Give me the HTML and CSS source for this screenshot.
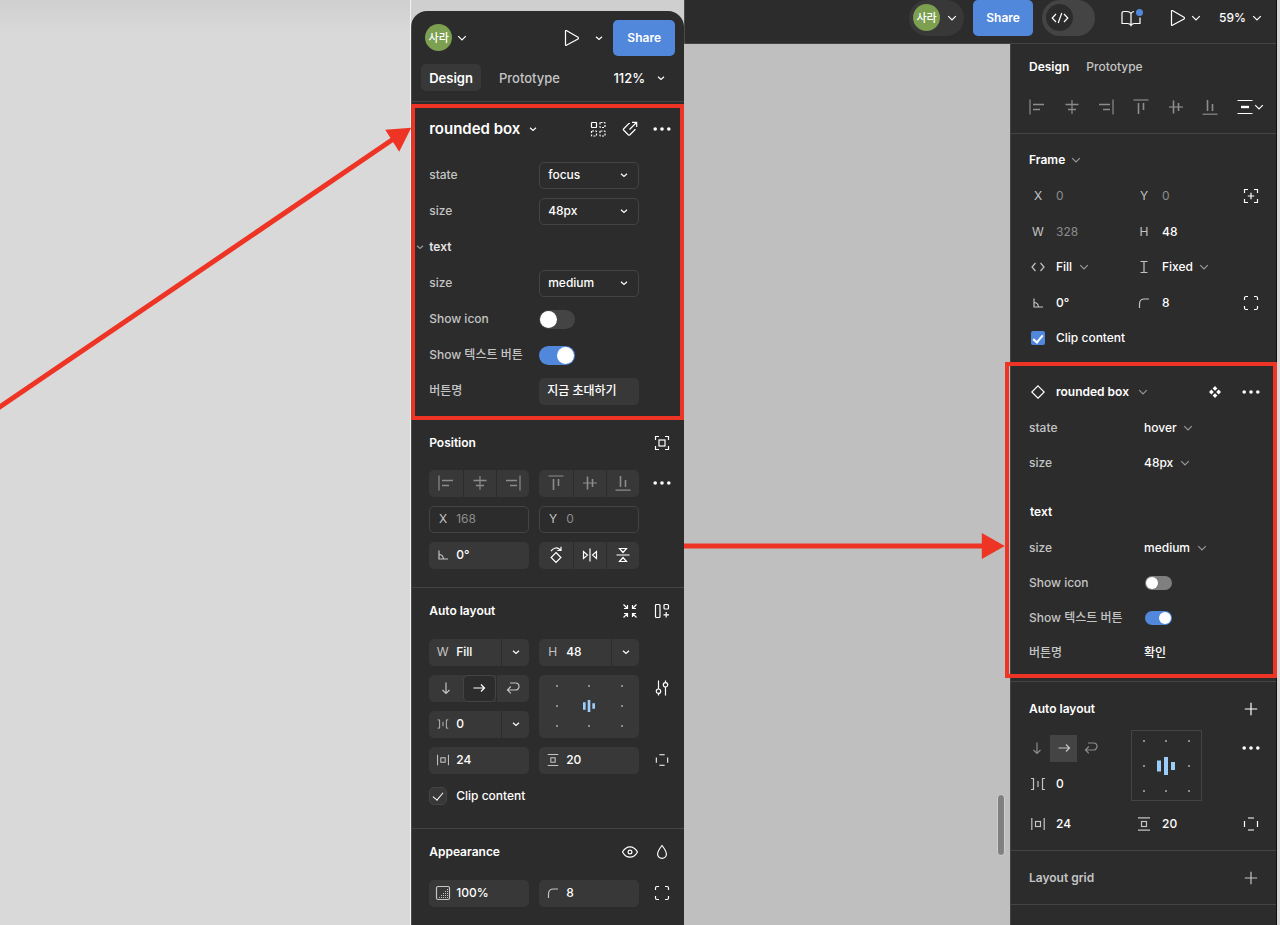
FILE: index.html
```html
<!DOCTYPE html>
<html lang="ko">
<head>
<meta charset="utf-8">
<meta name="viewport" content="width=device-width, initial-scale=1">
<title>Design panel comparison</title>
<link rel="stylesheet" href="styles.css">
</head>
<body>
<svg class="sprite" aria-hidden="true">
  <symbol id="chev" viewBox="0 0 10 10"><path d="M2 3.8 5 6.500 8 3.800"/></symbol>
  <symbol id="chev-wide" viewBox="0 0 10 10"><path d="M1.200 3.200 5 7 8.800 3.200"/></symbol>
  <symbol id="play" viewBox="0 0 16 18"><path d="M1.500 2.200v13.600q0 .9.900.5L14 10q1-.9 0-1.800L2.400 1.600q-.9-.3-.9.600Z"/></symbol>
  <symbol id="dots" viewBox="0 0 18 6"><g fill="currentColor" stroke="none"><circle cx="2.200" cy="3" r="1.800"/><circle cx="9" cy="3" r="1.800"/><circle cx="15.800" cy="3" r="1.800"/></g></symbol>
  <symbol id="al-left" viewBox="0 0 16 16"><path d="M1 .5v15"/><path stroke-width="1.600" d="M4 5.500h11M4 10.500h7"/></symbol>
  <symbol id="al-hc" viewBox="0 0 16 16"><path d="M8 1v14"/><path stroke-width="1.600" d="M1.500 5.500h13M4 10.500h8"/></symbol>
  <symbol id="al-right" viewBox="0 0 16 16"><path d="M15 .5v15"/><path stroke-width="1.600" d="M1 5.500h11M5 10.500h7"/></symbol>
  <symbol id="al-top" viewBox="0 0 16 16"><path d="M.5 1h15"/><path stroke-width="1.600" d="M5.500 4v11M10.500 4v7"/></symbol>
  <symbol id="al-vc" viewBox="0 0 16 16"><path d="M1 8h14"/><path stroke-width="1.600" d="M5.500 1.500v13M10.500 4v8"/></symbol>
  <symbol id="al-bottom" viewBox="0 0 16 16"><path d="M.5 15.200h15"/><path stroke-width="1.600" d="M5.500 1v11M10.500 5v7"/></symbol>
  <symbol id="corners" viewBox="0 0 16 16"><path d="M1.500 5V3q0-1.500 1.500-1.500h2M11 1.500h2q1.500 0 1.500 1.500v2M14.500 11v2q0 1.500-1.500 1.500h-2M5 14.500H3q-1.500 0-1.500-1.500v-2"/></symbol>
  <symbol id="target" viewBox="0 0 16 16"><path d="M1.500 5V1.500H5M11 1.500h3.500V5M14.500 11v3.500H11M5 14.500H1.500V11"/><rect x="5" y="5" width="6" height="6"/></symbol>
  <symbol id="target-plus" viewBox="0 0 16 16"><path d="M1.500 5V1.500H5M11 1.500h3.500V5M14.500 11v3.500H11M5 14.500H1.500V11M8 4.800v6.400M4.800 8h6.400"/></symbol>
  <symbol id="angle" viewBox="0 0 12 12"><path d="M2 1.500V10h9M2 5.500q4 0 4.500 4.500"/></symbol>
  <symbol id="radius" viewBox="0 0 12 12"><path d="M1.500 11V7q0-5 5-5H11"/></symbol>
  <symbol id="down" viewBox="0 0 14 14"><path d="M7 1.500v11M3.500 9 7 12.500 10.500 9"/></symbol>
  <symbol id="right" viewBox="0 0 14 14"><path d="M1.500 7h11M9 3.500 12.500 7 9 10.500"/></symbol>
  <symbol id="wrap" viewBox="0 0 14 14"><path d="M4 2h5.500a3.500 3.500 0 0 1 0 7H1.500M4.800 5.500 1.500 9l3.300 3.300"/></symbol>
  <symbol id="gap" viewBox="0 0 16 16"><path d="M1 2.500h2.500v11H1M8 5v6M15 2.500h-2.500v11H15"/></symbol>
  <symbol id="pad-h" viewBox="0 0 16 16"><path d="M1.800 2v12M14.200 2v12"/><rect x="5.500" y="5.500" width="5" height="5"/></symbol>
  <symbol id="pad-v" viewBox="0 0 16 16"><path d="M2 1.800h12M2 14.200h12"/><rect x="5.500" y="5.500" width="5" height="5"/></symbol>
  <symbol id="sides" viewBox="0 0 16 16"><path d="M5 2h6M5 14h6M1.500 5v6M14.500 5v6"/></symbol>
  <symbol id="plus" viewBox="0 0 14 14"><path d="M7 .8v12.400M.8 7h12.400"/></symbol>
  <symbol id="grid-of-dots" viewBox="0 0 16 16"><rect x="1.500" y="1.500" width="5" height="5" rx=".5"/><g stroke-dasharray="2 1.300"><rect x="10" y="1.500" width="5" height="5" rx=".5"/><rect x="1.500" y="10" width="5" height="5" rx=".5"/><rect x="10" y="10" width="5" height="5" rx=".5"/></g></symbol>
  <symbol id="detach" viewBox="0 0 16 16"><path d="M8 2.500H6.800L1.500 8q-.5.500 0 1l5 5q.6.500 1.200 0l5.300-5.300V8M7.500 8.500l7-7M10 1.300h4.700V6"/></symbol>
  <symbol id="rotate" viewBox="0 0 16 18"><path d="m8 6.500 4.900 5L8 16.500l-4.900-5ZM3 5Q7.500-.5 12.500 4M13 .8v3.700H9.300"/></symbol>
  <symbol id="flip-h" viewBox="0 0 16 16"><path d="M8 1.500v13M1.500 4.500v7l4-3.500ZM14.500 4.500v7l-4-3.500Z"/></symbol>
  <symbol id="flip-v" viewBox="0 0 16 16"><path d="M1.500 8h13M4.500 1.500h7L8 5.500ZM4.500 14.500h7L8 10.500Z"/></symbol>
  <symbol id="shrink" viewBox="0 0 16 16"><path d="m1.500 1.500 4 4M5.500 2v3.500H2M14.500 1.500l-4 4M10.500 2v3.500H14M1.500 14.500l4-4M5.500 14v-3.500H2M14.500 14.500l-4-4M10.500 14v-3.500H14"/></symbol>
  <symbol id="layout-plus" viewBox="0 0 16 16"><rect x="1.500" y="1.500" width="4.500" height="13" rx="1"/><rect x="10" y="1.500" width="4.500" height="4.500" rx="1"/><path d="M12.200 9v5.500M9.500 11.800H15"/></symbol>
  <symbol id="sliders" viewBox="0 0 16 16"><path d="M4.500.5V9M4.500 13.500v2M11.500.5v2M11.500 7v8.500"/><circle cx="4.500" cy="11.200" r="2.200"/><circle cx="11.500" cy="4.800" r="2.200"/></symbol>
  <symbol id="eye" viewBox="0 0 18 14"><path d="M1.500 7Q4.500 1.800 9 1.800T16.500 7Q13.500 12.200 9 12.200T1.500 7Z"/><circle cx="9" cy="7" r="1.900"/></symbol>
  <symbol id="drop" viewBox="0 0 14 16"><path d="M7 1.500Q2.600 7 2.600 10a4.400 4.400 0 0 0 8.800 0Q11.400 7 7 1.500Z"/></symbol>
  <symbol id="opacity" viewBox="0 0 16 16"><rect x="1.500" y="1.500" width="13" height="13" rx="1.500"/><path stroke-dasharray="1 1" d="M4 12.500h9M6 10.500h7M8 8.500h5M10 6.500h3M12 4.500h1"/></symbol>
  <symbol id="hug" viewBox="0 0 14 10"><path d="M4.500 1 1 5l3.500 4M9.500 1 13 5 9.500 9"/></symbol>
  <symbol id="ibeam" viewBox="0 0 10 14"><path d="M5 1.500v11M1.500 1.500h7M1.500 12.500h7"/></symbol>
  <symbol id="diamond" viewBox="0 0 14 14"><path d="m7 .8 6.200 6.200L7 13.200.8 7Z"/></symbol>
  <symbol id="component" viewBox="0 0 12 12"><path fill="currentColor" stroke="none" d="m6 0 2.400 2.400L6 4.800 3.600 2.400ZM6 7.200l2.400 2.400L6 12 3.600 9.600ZM2.400 3.600 4.800 6 2.400 8.400 0 6ZM9.600 3.600 12 6 9.600 8.400 7.200 6Z"/></symbol>
  <symbol id="code" viewBox="0 0 18 14"><path d="M5 3 1.200 7 5 11M13 3l3.800 4L13 11M10.800 2 7.200 12"/></symbol>
  <symbol id="book" viewBox="0 0 22 18"><path d="M11 4.500Q9.500 2.500 7 2.500H4Q2 2.500 2 4.500v10h5.500q2.500 0 3.500 2 1-2 3.500-2H20V8.500M11 4.500v11.500M11 4.500Q12 2.800 14 2.500"/></symbol>
  <symbol id="distribute" viewBox="0 0 16 16"><path d="M.5 1.500h15M.5 14.500h15"/><path stroke-width="2.400" d="M4 8h8"/></symbol>
  <symbol id="bars" viewBox="0 0 18 18"><path stroke="none" fill="currentColor" d="M0 3.500h4v11H0ZM7 0h4v18H7ZM14 5h4v8h-4Z"/></symbol>
</svg>

<main class="board">
  <div class="backdrop">
    <svg class="arrow arrow-up" viewBox="0 0 411 925" aria-hidden="true">
      <path class="shaft" d="M-2 409 396 138"/><path class="head" d="M412 128 400 152 386 130Z"/>
    </svg>
  </div>

  <aside class="panel" aria-label="New design panel">
    <header class="panel-top">
      <span class="avatar">사라</span>
      <button class="plain" aria-label="Account menu"><svg class="i10"><use href="#chev-wide"/></svg></button>
      <span class="push"></span>
      <button class="plain" aria-label="Play"><svg class="i-play"><use href="#play"/></svg></button>
      <button class="plain play-menu" aria-label="Play options"><svg class="i10"><use href="#chev"/></svg></button>
      <button class="share">Share</button>
    </header>
    <nav class="tabs">
      <button class="tab tab-on">Design</button>
      <button class="tab">Prototype</button>
      <button class="plain zoom">112% <svg class="i10"><use href="#chev"/></svg></button>
    </nav>

    <section class="marked">
      <div class="heading heading-big">
        <h2>rounded box</h2><svg class="i10"><use href="#chev"/></svg>
        <div class="actions">
          <button class="plain" aria-label="Variants"><svg class="i16"><use href="#grid-of-dots"/></svg></button>
          <button class="plain" aria-label="Go to component"><svg class="i16"><use href="#detach"/></svg></button>
          <button class="plain" aria-label="More"><svg class="i-dots"><use href="#dots"/></svg></button>
        </div>
      </div>
      <div class="props">
        <label for="a-state">state</label>
        <span class="pick"><select id="a-state"><option>focus</option></select><svg class="i10"><use href="#chev"/></svg></span>
        <label for="a-size">size</label>
        <span class="pick"><select id="a-size"><option>48px</option></select><svg class="i10"><use href="#chev"/></svg></span>
        <h3 class="group"><svg class="i10 dim"><use href="#chev"/></svg>text</h3>
        <label for="a-tsize">size</label>
        <span class="pick"><select id="a-tsize"><option>medium</option></select><svg class="i10"><use href="#chev"/></svg></span>
        <label for="a-icon">Show icon</label>
        <input class="toggle" type="checkbox" role="switch" id="a-icon">
        <label for="a-btn">Show 텍스트 버튼</label>
        <input class="toggle" type="checkbox" role="switch" id="a-btn" checked>
        <label for="a-name">버튼명</label>
        <span class="field"><input type="text" id="a-name" value="지금 초대하기"></span>
      </div>
    </section>

    <section class="section">
      <div class="heading"><h2>Position</h2><div class="actions"><button class="plain" aria-label="Absolute position"><svg class="i16"><use href="#target"/></svg></button></div></div>
      <div class="fields">
        <div class="segment muted">
          <button aria-label="Align left"><svg class="i16"><use href="#al-left"/></svg></button>
          <button aria-label="Align horizontal centers"><svg class="i16"><use href="#al-hc"/></svg></button>
          <button aria-label="Align right"><svg class="i16"><use href="#al-right"/></svg></button>
        </div>
        <div class="segment muted">
          <button aria-label="Align top"><svg class="i16"><use href="#al-top"/></svg></button>
          <button aria-label="Align vertical centers"><svg class="i16"><use href="#al-vc"/></svg></button>
          <button aria-label="Align bottom"><svg class="i16"><use href="#al-bottom"/></svg></button>
        </div>
        <button class="plain" aria-label="More"><svg class="i-dots"><use href="#dots"/></svg></button>
        <label class="field outlined"><span class="key">X</span><input type="text" value="168"></label>
        <label class="field outlined"><span class="key">Y</span><input type="text" value="0"></label>
        <span></span>
        <label class="field"><span class="key"><svg class="i12"><use href="#angle"/></svg></span><input type="text" value="0°" aria-label="Rotation"></label>
        <div class="segment">
          <button aria-label="Rotate"><svg class="i-play"><use href="#rotate"/></svg></button>
          <button aria-label="Flip horizontal"><svg class="i16"><use href="#flip-h"/></svg></button>
          <button aria-label="Flip vertical"><svg class="i16"><use href="#flip-v"/></svg></button>
        </div>
        <span></span>
      </div>
    </section>

    <section class="section">
      <div class="heading heading-tall"><h2>Auto layout</h2><div class="actions">
        <button class="plain" aria-label="Resize to fit"><svg class="i16"><use href="#shrink"/></svg></button>
        <button class="plain" aria-label="Add layout"><svg class="i16"><use href="#layout-plus"/></svg></button></div></div>
      <div class="fields">
        <div class="field split"><label class="key" for="a-w">W</label><input type="text" id="a-w" value="Fill"><button aria-label="Width mode"><svg class="i10"><use href="#chev"/></svg></button></div>
        <div class="field split"><label class="key" for="a-h">H</label><input type="text" id="a-h" value="48"><button aria-label="Height mode"><svg class="i10"><use href="#chev"/></svg></button></div>
        <span></span>
        <div class="segment flow">
          <button aria-label="Vertical"><svg class="i14"><use href="#down"/></svg></button>
          <button class="on" aria-label="Horizontal"><svg class="i14"><use href="#right"/></svg></button>
          <button aria-label="Wrap"><svg class="i14"><use href="#wrap"/></svg></button>
        </div>
        <div class="align-pad">
          <i></i><i></i><i></i><i></i><svg class="i12 bars"><use href="#bars"/></svg><i></i><i></i><i></i><i></i>
        </div>
        <button class="plain" aria-label="Layout settings"><svg class="i16"><use href="#sliders"/></svg></button>
        <div class="field split"><span class="key"><svg class="i12"><use href="#gap"/></svg></span><input type="text" value="0" aria-label="Gap"><button aria-label="Gap mode"><svg class="i10"><use href="#chev"/></svg></button></div>
        <span></span>
        <label class="field"><span class="key"><svg class="i14"><use href="#pad-h"/></svg></span><input type="text" value="24" aria-label="Horizontal padding"></label>
        <label class="field"><span class="key"><svg class="i14"><use href="#pad-v"/></svg></span><input type="text" value="20" aria-label="Vertical padding"></label>
        <button class="plain" aria-label="Individual padding"><svg class="i14"><use href="#sides"/></svg></button>
        <label class="check"><input type="checkbox" checked>Clip content</label>
      </div>
    </section>

    <section class="section">
      <div class="heading heading-tall"><h2>Appearance</h2><div class="actions">
        <button class="plain" aria-label="Visibility"><svg class="i-eye"><use href="#eye"/></svg></button>
        <button class="plain" aria-label="Blend mode"><svg class="i16"><use href="#drop"/></svg></button></div></div>
      <div class="fields">
        <label class="field"><span class="key"><svg class="i16"><use href="#opacity"/></svg></span><input type="text" value="100%" aria-label="Opacity"></label>
        <label class="field"><span class="key"><svg class="i12"><use href="#radius"/></svg></span><input type="text" value="8" aria-label="Corner radius"></label>
        <button class="plain" aria-label="Individual corners"><svg class="i16"><use href="#corners"/></svg></button>
      </div>
    </section>
  </aside>

  <div class="editor">
    <header class="toolbar">
      <button class="account"><span class="avatar">사라</span><svg class="i10"><use href="#chev-wide"/></svg></button>
      <button class="share">Share</button>
      <button class="dev" aria-label="Dev mode"><span class="knob"><svg class="i-eye"><use href="#code"/></svg></span></button>
      <button class="plain book" aria-label="Library"><svg class="i-book"><use href="#book"/></svg><span class="badge"></span></button>
      <button class="plain present" aria-label="Present"><svg class="i-play"><use href="#play"/></svg><svg class="i10"><use href="#chev-wide"/></svg></button>
      <button class="plain percent">59% <svg class="i10"><use href="#chev-wide"/></svg></button>
    </header>
    <div class="work">
      <div class="canvas">
        <svg class="arrow arrow-right" viewBox="0 0 321 26" aria-hidden="true">
          <path class="shaft" d="M0 13h300"/><path class="head" d="M321 13 298 26V0Z"/>
        </svg>
        <div class="scrollbar"></div>
      </div>
      <aside class="sidebar" aria-label="Old design panel">
        <nav class="side-tabs"><button class="plain strong">Design</button><button class="plain soft">Prototype</button></nav>
        <div class="side-align">
          <button class="plain" aria-label="Align left"><svg class="i16"><use href="#al-left"/></svg></button>
          <button class="plain" aria-label="Align horizontal centers"><svg class="i16"><use href="#al-hc"/></svg></button>
          <button class="plain" aria-label="Align right"><svg class="i16"><use href="#al-right"/></svg></button>
          <button class="plain" aria-label="Align top"><svg class="i16"><use href="#al-top"/></svg></button>
          <button class="plain" aria-label="Align vertical centers"><svg class="i16"><use href="#al-vc"/></svg></button>
          <button class="plain" aria-label="Align bottom"><svg class="i16"><use href="#al-bottom"/></svg></button>
          <button class="plain spread" aria-label="Distribute"><svg class="i16"><use href="#distribute"/></svg><svg class="i10"><use href="#chev-wide"/></svg></button>
        </div>

        <section class="frame">
          <h2 class="whole">Frame <svg class="i10 dim"><use href="#chev-wide"/></svg></h2>
          <label class="cell faint"><span class="key">X</span><input type="text" value="0"></label>
          <label class="cell faint"><span class="key">Y</span><input type="text" value="0"></label>
          <button class="plain" aria-label="Absolute position"><svg class="i16"><use href="#target-plus"/></svg></button>
          <label class="cell faint"><span class="key">W</span><input type="text" value="328"></label>
          <label class="cell"><span class="key">H</span><input type="text" value="48"></label>
          <span></span>
          <label class="cell"><span class="key"><svg class="i-hug"><use href="#hug"/></svg></span><select aria-label="Width mode"><option>Fill</option></select><svg class="i10 dim"><use href="#chev-wide"/></svg></label>
          <label class="cell"><span class="key"><svg class="i-beam"><use href="#ibeam"/></svg></span><select aria-label="Height mode"><option>Fixed</option></select><svg class="i10 dim"><use href="#chev-wide"/></svg></label>
          <span></span>
          <label class="cell"><span class="key"><svg class="i12"><use href="#angle"/></svg></span><input type="text" value="0°" aria-label="Rotation"></label>
          <label class="cell"><span class="key"><svg class="i12"><use href="#radius"/></svg></span><input type="text" value="8" aria-label="Corner radius"></label>
          <button class="plain" aria-label="Individual corners"><svg class="i16"><use href="#corners"/></svg></button>
          <label class="check-blue whole"><input type="checkbox" checked>Clip content</label>
        </section>

        <section class="marked marked-side">
          <div class="side-title"><span class="key"><svg class="i14"><use href="#diamond"/></svg></span><h2>rounded box</h2><svg class="i10 dim"><use href="#chev-wide"/></svg>
            <div class="actions">
              <button class="plain" aria-label="Go to component"><svg class="i12"><use href="#component"/></svg></button>
              <button class="plain" aria-label="More"><svg class="i-dots"><use href="#dots"/></svg></button>
            </div>
          </div>
          <div class="side-props">
            <label for="b-state">state</label>
            <span class="loose"><select id="b-state"><option>hover</option></select><svg class="i10 dim"><use href="#chev-wide"/></svg></span>
            <label for="b-size">size</label>
            <span class="loose"><select id="b-size"><option>48px</option></select><svg class="i10 dim"><use href="#chev-wide"/></svg></span>
          </div>
          <h3 class="side-group">text</h3>
          <div class="side-props">
            <label for="b-tsize">size</label>
            <span class="loose"><select id="b-tsize"><option>medium</option></select><svg class="i10 dim"><use href="#chev-wide"/></svg></span>
            <label for="b-icon">Show icon</label>
            <input class="toggle toggle-small" type="checkbox" role="switch" id="b-icon">
            <label for="b-btn">Show 텍스트 버튼</label>
            <input class="toggle toggle-small" type="checkbox" role="switch" id="b-btn" checked>
            <label for="b-name">버튼명</label>
            <input type="text" id="b-name" value="확인">
          </div>
        </section>

        <section class="side-auto">
          <div class="side-head"><h2>Auto layout</h2><button class="plain" aria-label="Add auto layout"><svg class="i14"><use href="#plus"/></svg></button></div>
          <div class="auto-grid">
            <div class="directions">
              <button aria-label="Vertical"><svg class="i14"><use href="#down"/></svg></button>
              <button class="on" aria-label="Horizontal"><svg class="i14"><use href="#right"/></svg></button>
              <button aria-label="Wrap"><svg class="i14"><use href="#wrap"/></svg></button>
            </div>
            <div class="align-box">
              <i></i><i></i><i></i><i></i><svg class="i18 bars"><use href="#bars"/></svg><i></i><i></i><i></i><i></i>
            </div>
            <button class="plain" aria-label="More"><svg class="i-dots"><use href="#dots"/></svg></button>
            <label class="cell"><span class="key"><svg class="i16"><use href="#gap"/></svg></span><input type="text" value="0" aria-label="Gap"></label>
          </div>
          <div class="pad-row">
            <label class="cell"><span class="key"><svg class="i16"><use href="#pad-h"/></svg></span><input type="text" value="24" aria-label="Horizontal padding"></label>
            <label class="cell"><span class="key"><svg class="i16"><use href="#pad-v"/></svg></span><input type="text" value="20" aria-label="Vertical padding"></label>
            <button class="plain" aria-label="Individual padding"><svg class="i16"><use href="#sides"/></svg></button>
          </div>
        </section>
        <section class="side-grid side-head"><h2>Layout grid</h2><button class="plain" aria-label="Add layout grid"><svg class="i14"><use href="#plus"/></svg></button></section>
      </aside>
    </div>
  </div>
</main>
</body>
</html>
```
FILE: styles.css
```css
* { box-sizing: border-box; }

:root {
  --bg: #2c2c2c;
  --field: #383838;
  --line: #444;
  --soft: #c4c4c4;
  --faint: #8c8c8c;
  --blue: #5288db;
  --red: #ee3424;
}

body {
  margin: 0;
  background: #d9d9d9;
  color: #fff;
  font: 500 12px/16px Inter, "Noto Sans CJK KR", sans-serif;
}

h2, h3 { margin: 0; font-size: 12px; font-weight: 600; }
svg { display: block; flex: none; fill: none; stroke: currentColor; stroke-width: 1.2; }
.sprite { position: absolute; width: 0; height: 0; }
.i10 { width: 10px; height: 10px; }
.i12 { width: 12px; height: 12px; }
.i14 { width: 14px; height: 14px; }
.i16 { width: 16px; height: 16px; }
.i18 { width: 18px; height: 18px; }
.i-play { width: 16px; height: 18px; }
.i-dots { width: 18px; height: 6px; }
.i-eye { width: 18px; height: 14px; }
.i-book { width: 22px; height: 18px; }
.i-hug { width: 14px; height: 10px; }
.i-beam { width: 10px; height: 14px; }
.dim { color: #999; }

button, input, select { font: inherit; color: inherit; margin: 0; }
button { display: flex; align-items: center; justify-content: center; padding: 0; border: 0; background: none; }
input[type="text"] { flex: 1; width: 100%; min-width: 0; padding: 0; border: 0; background: none; }
select { appearance: none; padding: 0; border: 0; background: none; }
input[type="checkbox"] { appearance: none; flex: none; }

.board { display: flex; min-height: 100vh; overflow: hidden; }
.backdrop {
  position: relative;
  flex: 411 1 0;
  border-right: 1px solid #f2f2f2;
  background: linear-gradient(#cfcfcf, #d9d9d9 32px);
}
.arrow { position: absolute; overflow: visible; z-index: 2; }
.arrow-up { top: 0; left: 0; width: 100%; }
.arrow-right { top: 489px; left: 0; width: calc(100% - 5px); }
.shaft { stroke: var(--red); stroke-width: 5; }
.head { fill: var(--red); stroke: none; }

/* Rounded panel */
.panel {
  flex: 0 0 273px;
  display: flex;
  flex-direction: column;
  margin-top: 11px;
  border-radius: 16px 16px 0 0;
  background: var(--bg);
  box-shadow: 0 -11px 0 16px #cfcfcf;
  clip-path: inset(-11px 0 0 0);
}
.panel-top { display: flex; align-items: center; height: 53px; padding: 0 9px 0 14px; }
.avatar {
  display: grid;
  place-items: center;
  width: 27px;
  height: 27px;
  border-radius: 50%;
  background: #7c9f50;
  font-size: 11px;
}
.avatar + .plain { margin-left: 5px; }
.push { flex: 1; }
.play-menu { margin: 0 9px 0 14px; }
.share { width: 62px; height: 36px; border-radius: 5px; background: var(--blue); font-weight: 600; }
.tabs { display: flex; align-items: center; height: 38px; margin-bottom: 2px; padding: 0 18px 10px 10px; border-bottom: 1px solid var(--line); }
.tab { height: 27px; padding: 0 8px; border-radius: 5px; color: var(--soft); font-size: 13px; }
.tab-on { margin-right: 10px; background: var(--field); color: #fff; font-weight: 600; }
.zoom { margin-left: auto; gap: 11px; font-size: 13px; }

.marked { border: 4px solid var(--red); padding: 0 6px 7px 14px; }
.heading { display: flex; align-items: center; height: 45px; }
.heading-tall { height: 46px; }
.heading-big { height: 42px; margin-bottom: 7px; gap: 8px; }
.heading-big h2 { font-size: 15px; }
.actions { display: flex; gap: 8px; margin-left: auto; }
.actions .plain { width: 24px; height: 24px; }

.props, .fields { display: grid; grid-template-columns: 1fr 1fr 25px; grid-auto-rows: 36px; column-gap: 10px; align-items: center; }
.props > label { grid-column: 1; white-space: nowrap; color: var(--soft); }
.props .group { grid-column: 1 / -1; display: flex; align-items: center; gap: 4px; margin-left: -14px; color: #e4e4e4; }
.pick { display: flex; align-items: center; height: 27px; padding: 0 9px 0 8px; border: 1px solid var(--line); border-radius: 5px; }
.pick select { flex: 1; min-width: 0; }
.toggle { width: 36px; height: 19px; padding: 1px; border-radius: 10px; background: #444; }
.toggle::before { content: ""; display: block; width: 17px; height: 17px; border-radius: 50%; background: #fff; }
.toggle:checked { background: var(--blue); }
.toggle:checked::before { margin-left: auto; }

.field { display: flex; align-items: center; height: 27px; border-radius: 5px; background: var(--field); }
.props .field { padding: 0 8px; }
.field .key { display: grid; place-items: center; width: 27px; color: var(--soft); font-weight: 400; }
.outlined { border: 1px solid var(--line); background: none; }
.outlined .key { width: 26px; }
.outlined input { color: var(--faint); font-weight: 400; }
.split button { width: 28px; height: 27px; border-left: 1px solid var(--bg); }

.section { padding: 0 10px 14px 18px; border-bottom: 1px solid var(--line); }
.fields > .plain { height: 24px; }
.segment { display: grid; grid-template-columns: repeat(3, 1fr); height: 27px; border-radius: 5px; background: var(--field); }
.segment button + button { border-left: 1px solid var(--bg); }
.muted { color: var(--faint); }
.flow button { color: var(--soft); }
.flow button.on { border: 1px solid var(--line); border-radius: 5px; background: var(--bg); color: #fff; }
.align-pad, .align-box { display: grid; grid-template-columns: repeat(3, 1fr); place-items: center; }
.align-pad { grid-row: span 2; height: 63px; padding: 4px 1px; border-radius: 5px; background: var(--field); }
.align-pad i, .align-box i { width: 2px; height: 2px; background: var(--faint); }
.bars { color: #9cccf8; }
.check { grid-column: 1 / -1; display: flex; align-items: center; gap: 9px; }
.check input { width: 18px; height: 18px; border: 1px solid var(--line); border-radius: 5px; background: var(--field); }
.check input::before, .check-blue input::before {
  content: "";
  display: block;
  width: 5px;
  height: 9px;
  margin: 2px auto 0;
  border: solid #fff;
  border-width: 0 1px 1px 0;
  rotate: 40deg;
}

/* Editor window */
.editor { flex: 593 1 0; min-width: 0; display: flex; flex-direction: column; border-right: 1px solid #111; margin-right: 3px; }
.toolbar { display: flex; align-items: center; justify-content: flex-end; height: 44px; padding: 0 14px 8px 0; border-bottom: 1px solid var(--line); background: var(--bg); }
.toolbar .share { width: 60px; }
.account { gap: 7px; height: 36px; margin-right: 9px; padding: 0 7px 0 4px; border-radius: 18px; background: var(--field); }
.dev { justify-content: flex-start; width: 53px; height: 36px; margin-left: 9px; padding: 4px; border-radius: 18px; background: #444; }
.knob { display: grid; place-items: center; width: 27px; height: 27px; border-radius: 50%; background: var(--bg); }
.book { position: relative; margin-left: 25px; }
.badge { position: absolute; top: 0; right: -1px; width: 7px; height: 7px; border-radius: 50%; background: var(--blue); }
.present { gap: 5px; margin-left: 28px; }
.percent { gap: 6px; margin-left: 18px; }

.work { flex: 1; display: flex; }
.canvas { position: relative; flex: 1; display: flex; justify-content: flex-end; background: #bfbfbf; }
.scrollbar { width: 8px; height: 62px; margin: 750px 5px 0 0; border: 1px solid #d0d0d0; border-radius: 4px; background: #808080; }
.sidebar { flex: 0 0 266px; border-left: 1px solid var(--line); background: var(--bg); }
.side-tabs { display: flex; gap: 17px; height: 46px; padding-left: 18px; }
.strong { font-weight: 600; }
.soft { color: var(--soft); }
.side-align { display: flex; justify-content: space-between; height: 44px; padding: 0 12px 9px 18px; border-bottom: 1px solid var(--line); color: var(--faint); }
.spread { gap: 1px; color: #fff; }

.frame { display: grid; grid-template-columns: 106px 104px 1fr; grid-template-rows: 36px 36px 35px 36px 35px 36px; align-items: center; padding: 8px 13px 6px 18px; }
.whole { grid-column: 1 / -1; display: flex; align-items: center; gap: 6px; }
.cell, .check-blue { display: flex; align-items: center; gap: 9px; }
.check-blue { gap: 9px; }
.sidebar .key { display: grid; place-items: center; width: 18px; flex: none; color: var(--soft); font-weight: 400; }
.cell select { margin-right: -3px; }
.faint input { color: var(--faint); font-weight: 400; }
.frame > .plain, .pad-row > .plain, .auto-grid > .plain { justify-self: end; width: 24px; height: 24px; }
.check-blue input { width: 14px; height: 14px; margin: 0 2px; border-radius: 2px; background: var(--blue); }
.check-blue input::before { width: 4px; height: 8px; border-width: 0 2px 2px 0; }

.marked-side { position: relative; margin: 0 -1px 0 -6px; padding: 8px 10px 4px 20px; }
.side-title { display: flex; align-items: center; gap: 9px; height: 36px; }
.side-title .actions { gap: 12px; }
.side-title .key { color: #fff; }
.side-props { display: grid; grid-template-columns: 115px 1fr; grid-auto-rows: 35px; align-items: center; }
.side-props > label { color: var(--soft); white-space: nowrap; }
.loose { display: flex; align-items: center; gap: 6px; }
.side-group { height: 50px; padding: 24px 0 10px 1px; }
.toggle-small { width: 27px; height: 14px; margin-left: 1px; background: #7f7f7f; }
.toggle-small::before { width: 12px; height: 12px; }

.side-auto { margin-top: 3px; border-top: 1px solid var(--line); border-bottom: 1px solid var(--line); padding: 8px 13px 4px 18px; }
.side-head { display: flex; align-items: center; justify-content: space-between; }
.side-auto .side-head { height: 37px; }
.side-head .plain { width: 24px; height: 24px; }
.auto-grid { display: grid; grid-template-columns: 102px 71px 1fr; grid-template-rows: 36px 35px; align-items: center; margin-top: 3px; }
.directions { display: flex; margin-left: -6px; color: var(--faint); }
.directions button { width: 27px; height: 27px; }
.directions .on { background: #444; color: var(--soft); }
.align-box { grid-row: span 2; height: 71px; padding: 1px; border: 1px solid var(--line); }
.pad-row { display: grid; grid-template-columns: 106px 104px 1fr; align-items: center; height: 45px; }
.side-grid { height: 54px; padding: 0 13px 0 18px; border-bottom: 1px solid var(--line); color: var(--soft); }
```
